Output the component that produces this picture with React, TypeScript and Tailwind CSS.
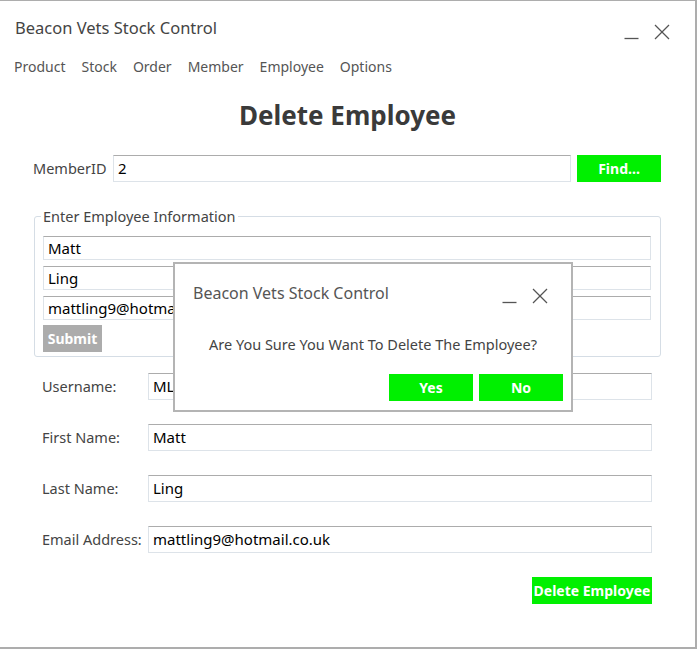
import React from 'react';

const font = { fontFamily: '"Noto Sans", "Open Sans", sans-serif' };

const WindowButtons = ({ size = 15 }: { size?: number }) => (
  <div className="flex items-end gap-[15px]">
    <svg width={size} height={size} viewBox="0 0 15 15">
      <line x1="0.5" y1="13.5" x2="14.5" y2="13.5" stroke="#555" strokeWidth="1.3" />
    </svg>
    <svg width={size + 1} height={size + 1} viewBox="0 0 16 16">
      <line x1="1" y1="1" x2="15" y2="15" stroke="#555" strokeWidth="1.3" />
      <line x1="15" y1="1" x2="1" y2="15" stroke="#555" strokeWidth="1.3" />
    </svg>
  </div>
);

const TextBox = ({ value, className }: { value: string; className: string }) => (
  <div
    className={`flex items-center border border-[#dde3e9] border-t-[#acacac] bg-white pl-[4px] text-[15px] text-black overflow-hidden whitespace-nowrap ${className}`}
  >
    {value}
  </div>
);

const GreenButton = ({ label, className }: { label: string; className: string }) => (
  <button className={`bg-[#00f000] text-white font-bold text-[14px] flex items-center justify-center ${className}`}>
    {label}
  </button>
);

export default function App() {
  const menu = ['Product', 'Stock', 'Order', 'Member', 'Employee', 'Options'];
  const rows = [
    { label: 'Username:', value: 'ML' },
    { label: 'First Name:', value: 'Matt' },
    { label: 'Last Name:', value: 'Ling' },
    { label: 'Email Address:', value: 'mattling9@hotmail.co.uk' },
  ];

  return (
    <div className="relative w-[697px] h-[651px] bg-white overflow-hidden" style={font}>
      <div className="w-[697px] h-[649px] border-l-0 border-t border-r-2 border-b-2 border-[#adadad] text-[#444]">
        {/* title bar */}
        <div className="flex items-start justify-between pl-[15px] pr-[25px] pt-[15px]">
          <div className="text-[16.5px] leading-[24px]">Beacon Vets Stock Control</div>
          <div className="pt-[8px]">
            <WindowButtons />
          </div>
        </div>

        {/* menu */}
        <div className="flex gap-[16px] pl-[14px] mt-[16px] text-[14px] leading-[22px] text-[#555]">
          {menu.map((m) => (
            <span key={m}>{m}</span>
          ))}
        </div>

        <h1 className="mt-[20px] text-center text-[26px] leading-[34px] font-bold text-[#3a3a3a]">Delete Employee</h1>

        {/* member id row */}
        <div className="flex items-center h-[27px] mt-[23px] pl-[33px]">
          <span className="text-[14.5px] w-[80px]">MemberID</span>
          <TextBox value="2" className="w-[458px] h-[27px]" />
          <GreenButton label="Find..." className="ml-[6px] w-[84px] h-[27px]" />
        </div>

        {/* employee info */}
        <fieldset className="ml-[34px] mt-[25px] w-[627px] border border-[#d5dde5] rounded-[3px] pl-[6px] pr-[9px] pb-[4px]">
          <legend className="px-[2px] text-[14.5px] leading-[18px] text-[#444]">Enter Employee Information</legend>
          <div className="flex flex-col gap-[6px] pl-[2px] mt-[11px]">
            <TextBox value="Matt" className="h-[24px]" />
            <TextBox value="Ling" className="h-[24px]" />
            <TextBox value="mattling9@hotmail.co.uk" className="h-[24px]" />
          </div>
          <button className="ml-[2px] mt-[5px] w-[59px] h-[27px] bg-[#acacac] text-white font-bold text-[14px]">Submit</button>
        </fieldset>

        {/* detail rows */}
        <div className="flex flex-col gap-[24px] mt-[16px] pl-[42px]">
          {rows.map((r) => (
            <div key={r.label} className="flex items-center h-[27px]">
              <span className="w-[106px] text-[14.5px] whitespace-nowrap">{r.label}</span>
              <TextBox value={r.value} className="w-[504px] h-[27px]" />
            </div>
          ))}
        </div>

        <div className="flex justify-end pr-[43px] mt-[24px]">
          <GreenButton label="Delete Employee" className="w-[120px] h-[27px]" />
        </div>
      </div>

      {/* confirm dialog */}
      <div className="absolute left-[173px] top-[262px] w-[400px] h-[150px] bg-white border-2 border-[#b4b4b4] text-[#555]">
        <div className="flex items-start justify-between pl-[18px] pr-[23px] pt-[17px]">
          <div className="text-[16px] leading-[24px]">Beacon Vets Stock Control</div>
          <div className="pt-[7px]">
            <WindowButtons />
          </div>
        </div>
        <div className="mt-[28px] text-center text-[14.5px] leading-[22px] text-[#444]">Are You Sure You Want To Delete The Employee?</div>
        <div className="flex justify-end gap-[6px] pr-[8px] mt-[19px]">
          <GreenButton label="Yes" className="w-[84px] h-[27px]" />
          <GreenButton label="No" className="w-[84px] h-[27px]" />
        </div>
      </div>
    </div>
  );
}
